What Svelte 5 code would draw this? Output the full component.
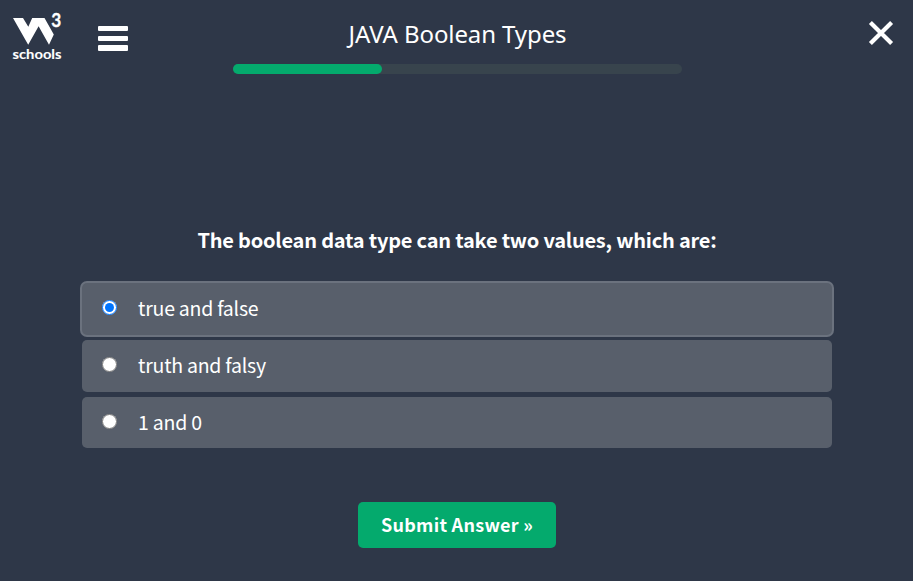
<script>
  const options = ['true and false', 'truth and falsy', '1 and 0'];
  let selected = $state(0);
  const progress = 33.2;
</script>

<div class="quiz">
  <header>
    <div class="left">
      <svg class="logo" width="52" height="52" viewBox="0 0 52 52" aria-label="W3Schools">
        <path d="M3 8H13L18.3 16.8L22.2 8H34.5L43.8 24.6L39 34.8L28.6 16.2L18.2 34.8Z" fill="#fff" />
        <text class="three" x="41.3" y="16.7" textLength="10" lengthAdjust="spacingAndGlyphs">3</text>
        <text class="schools" x="2.5" y="48.9" textLength="49" lengthAdjust="spacingAndGlyphs">schools</text>
      </svg>
      <button class="menu" aria-label="Menu"><i></i><i></i><i></i></button>
    </div>
    <div class="heading">
      <h1>JAVA Boolean Types</h1>
      <div class="track"><div class="bar" style="width: {progress}%"></div></div>
    </div>
    <button class="close" aria-label="Close">
      <svg width="26" height="26" viewBox="0 0 26 26"><path d="M2.4 2.4L23.6 23.6M23.6 2.4L2.4 23.6" stroke="#fff" stroke-width="4.2" /></svg>
    </button>
  </header>
  <main>
    <h2>The boolean data type can take two values, which are:</h2>
    <div class="options">
      {#each options as option, i}
        <label class:selected={selected === i}>
          <input type="radio" name="answer" value={i} bind:group={selected} />
          <span>{option}</span>
        </label>
      {/each}
    </div>
    <button class="submit">Submit Answer »</button>
  </main>
</div>

<style>
  :global(body) { margin: 0; background: #2e3748; }
  .quiz {
    width: 100%;
    height: 581px;
    overflow: hidden;
    color: #fff;
    background: #2e3748;
    font-family: "Noto Sans CJK SC", "Noto Sans", sans-serif;
  }
  button { border: 0; padding: 0; background: none; color: #fff; font: inherit; display: block; }
  header { display: flex; justify-content: space-between; height: 84px; }
  .left { width: 233px; display: flex; padding: 10px 0 0 10px; box-sizing: border-box; }
  .logo { overflow: visible; }
  .three { font: 700 18px Lato, sans-serif; fill: #fff; stroke: #fff; stroke-width: 0.3px; }
  .schools { font: 700 14px Lato, sans-serif; fill: #fff; stroke: #fff; stroke-width: 0.1px; }
  .menu { display: flex; flex-direction: column; gap: 4.5px; margin: 16px 0 0 36.3px; width: 30px; height: 25px; }
  .menu i { height: 5.2px; flex: none; border-radius: 1px; background: #fff; }
  .heading { width: 449px; }
  h1 {
    margin: 0;
    padding-top: 17px;
    height: 47px;
    font: 400 24px/34px "Noto Sans", "Open Sans", sans-serif;
    letter-spacing: -0.1px;
    text-align: center;
    white-space: nowrap;
  }
  .track { height: 10px; border-radius: 5px; background: #38444d; }
  .bar { height: 10px; border-radius: 5px; background: #04aa6d; }
  .close { width: 231px; height: 46px; padding: 20px 19px 0 186px; }
  .close svg { display: block; }
  main { display: flex; flex-direction: column; align-items: center; padding-top: 141px; }
  h2 { margin: 0; padding-left: 1px; font-size: 20px; line-height: 30px; font-weight: 700; letter-spacing: -0.21px; white-space: nowrap; }
  .options { width: 750px; margin-top: 28px; display: flex; flex-direction: column; gap: 5px; }
  label {
    height: 52px;
    border-radius: 5px;
    background: #585f6b;
    display: flex;
    align-items: center;
    font-size: 19.5px;
    letter-spacing: -0.24px;
    line-height: 30px;
    white-space: nowrap;
  }
  label span { padding-bottom: 2px; }
  label:last-child { height: 51px; }
  label.selected { box-shadow: 0 0 0 2px #6b727e; }
  input {
    width: 15px;
    height: 15px;
    margin: 0 21.6px 3px 20px;
  }
  .submit {
    width: 198px;
    height: 46px;
    margin-top: 54px;
    border-radius: 5px;
    background: #04aa6d;
    font-size: 18px;
    font-weight: 700;
    letter-spacing: 0.27px;
    line-height: 44px;
    padding: 0 0 2px 1px;
  }
</style>
